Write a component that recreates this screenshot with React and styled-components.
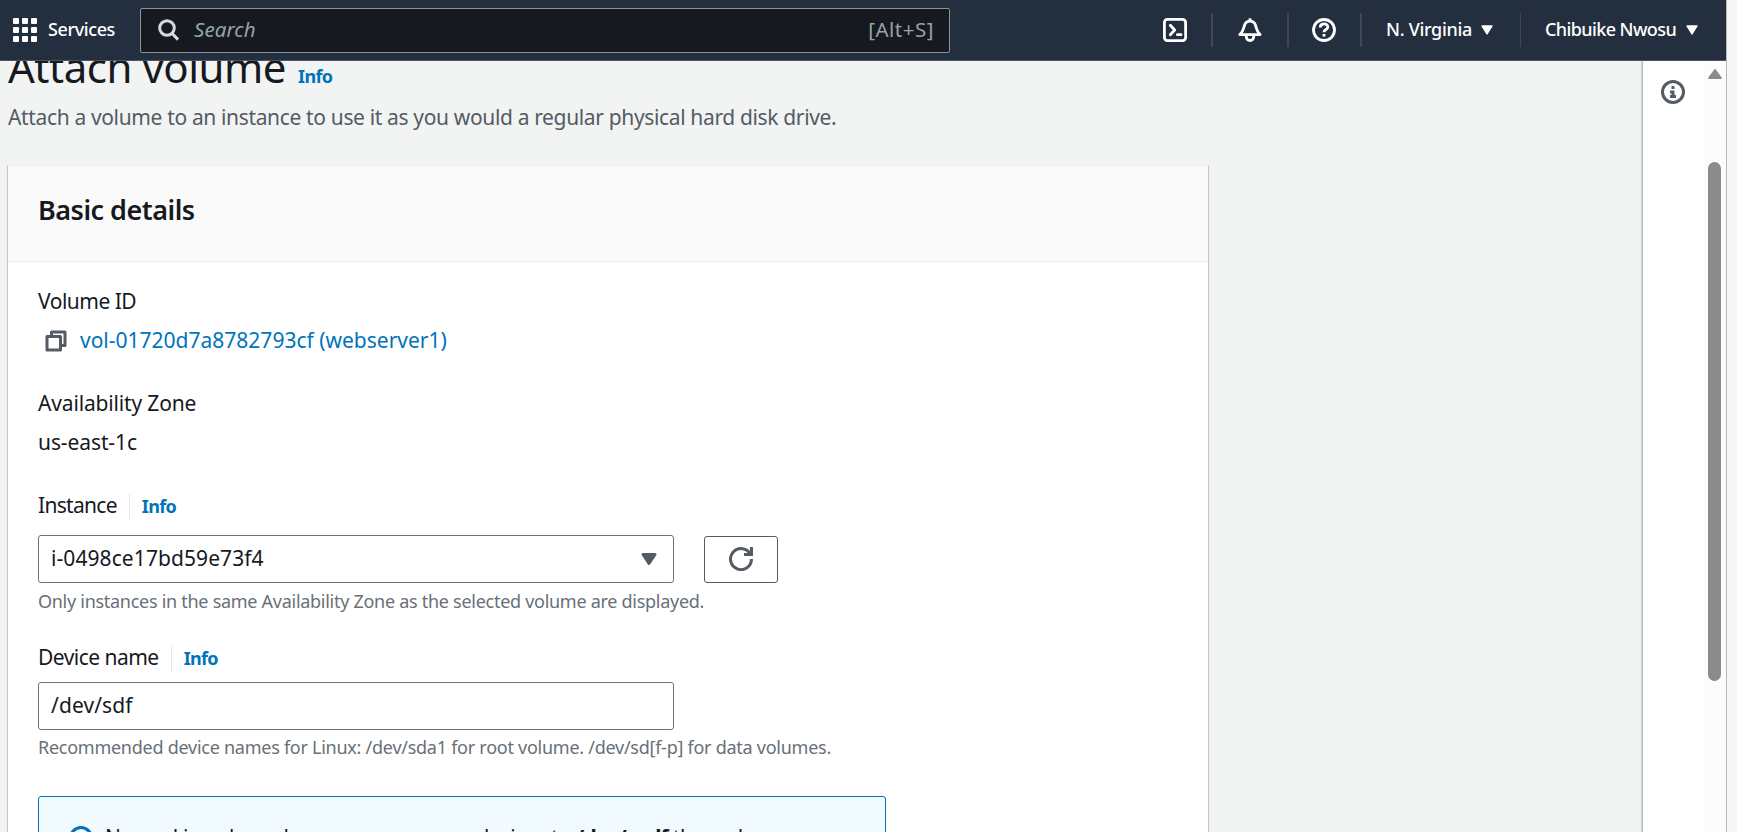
import React from 'react';
import styled, { createGlobalStyle } from 'styled-components';

const GlobalStyle = createGlobalStyle`
  *, *::before, *::after { box-sizing: border-box; }
  body {
    margin: 0;
    overflow: hidden;
    background: #f7f7f7;
    color: #16191f;
    font-family: 'Noto Sans', 'Liberation Sans', sans-serif;
    font-size: 21px;
    line-height: 33px;
  }
  button { font: inherit; margin: 0; }
  svg { display: block; flex: none; }
`;

const Frame = styled.div`
  display: flex;
  height: 832px;
  overflow: hidden;
`;

const Console = styled.div`
  width: 1726px;
  display: flex;
  flex-direction: column;
`;

const WindowEdge = styled.div`
  flex: 1;
  border-left: 1px solid #b9b9b9;
  background: #f7f7f7;
`;

/* Top navigation */
const TopNav = styled.header`
  flex: none;
  display: flex;
  align-items: center;
  height: 61px;
  padding-left: 13px;
  background: #232f3e;
  border-bottom: 1px solid #4b5664;
  color: #fff;
`;

const ServicesButton = styled.div`
  display: flex;
  align-items: center;
  gap: 11px;
  width: 127px;
`;

const DotGrid = styled.div`
  display: grid;
  grid-template-columns: repeat(3, 6px);
  grid-auto-rows: 6px;
  gap: 3px;
`;

const Dot = styled.i`
  background: #fff;
  border-radius: 1px;
`;

const NavLabel = styled.span`
  padding-bottom: 2px;
  font-size: 18px;
  line-height: 24px;
  font-weight: 500;
  letter-spacing: ${(p) => p.$tracking}px;
  width: ${(p) => (p.$width ? `${p.$width}px` : 'auto')};
  white-space: nowrap;
`;

const SearchBox = styled.div`
  display: flex;
  align-items: center;
  width: 810px;
  height: 45px;
  padding: 0 15px 0 17px;
  border: 1px solid #879596;
  border-radius: 2px;
  background: #16191f;
  color: #95a5a6;
  font-size: 20.5px;
`;

const SearchHint = styled.em`
  flex: 1;
  margin-left: 14px;
  padding-bottom: 2px;
  letter-spacing: 0.1px;
`;

const Shortcut = styled.span`
  padding-bottom: 2px;
  letter-spacing: 0.5px;
`;

const NavTools = styled.div`
  display: flex;
  align-items: center;
  margin-left: auto;
`;

const NavItem = styled.div`
  display: flex;
  align-items: center;
  gap: 10px;
  height: 34px;
  padding: 0 ${(p) => p.$right}px 0 ${(p) => p.$left}px;
  border-left: ${(p) => p.$rule || 0}px solid #414750;
`;

/* Work area */
const Workspace = styled.div`
  flex: 1;
  min-height: 0;
  display: flex;
`;

const Page = styled.main`
  flex: 1;
  overflow: hidden;
  padding-left: 8px;
  background: #f2f3f3;
`;

const TitleRow = styled.div`
  margin-top: -21px;
  height: 54px;
  display: flex;
  align-items: baseline;
  gap: 12px;
`;

const Title = styled.h1`
  margin: 0;
  font-size: 42px;
  line-height: 54px;
  font-weight: 400;
  letter-spacing: -0.48px;
`;

const InfoLink = styled.a`
  color: #0073bb;
  font-size: 18px;
  line-height: 24px;
  font-weight: 700;
  letter-spacing: -0.65px;
`;

const Description = styled.p`
  margin: 7px 0 31px;
  color: #545b64;
  letter-spacing: -0.352px;
`;

const Card = styled.section`
  width: 1200px;
  height: 800px;
  background: #fff;
  border-top: 1px solid #eaeded;
  box-shadow: 0 1px 1px 0 rgba(0, 28, 36, 0.3), 1px 1px 1px 0 rgba(0, 28, 36, 0.15),
    -1px 1px 1px 0 rgba(0, 28, 36, 0.15);
`;

const CardHeader = styled.div`
  height: 96px;
  padding: 27px 30px 0;
  background: #fafafa;
  border-bottom: 1px solid #eaeded;
`;

const CardTitle = styled.h2`
  margin: 0;
  font-size: 27px;
  line-height: 33px;
  font-weight: 600;
  letter-spacing: -0.5px;
`;

const CardBody = styled.div`
  padding: 23px 30px 0;
`;

const Field = styled.div`
  margin-bottom: ${(p) => p.$after}px;
`;

const LabelRow = styled.div`
  display: flex;
  align-items: baseline;
  margin-bottom: ${(p) => p.$gap ?? 6}px;
`;

const Label = styled.span`
  letter-spacing: ${(p) => p.$tracking}px;
`;

const LabelInfo = styled.span`
  display: flex;
  align-items: baseline;
  height: 26px;
  margin-left: 12px;
  padding-left: 12px;
  border-left: 1px solid #e6e8e9;
`;

const Value = styled.div`
  display: flex;
  align-items: center;
  gap: 12px;
  padding-left: ${(p) => p.$inset || 0}px;
  letter-spacing: ${(p) => p.$tracking || 0}px;
`;

const ResourceLink = styled.a`
  color: #0073bb;
`;

const ControlRow = styled.div`
  display: flex;
  align-items: flex-end;
  gap: 30px;
`;

const Control = styled.div`
  display: flex;
  align-items: center;
  justify-content: space-between;
  width: 636px;
  height: 48px;
  padding: 0 12px 1px;
  border: 1px solid #687078;
  border-radius: 3px;
  background: #fff;
  letter-spacing: 0.08px;
`;

const RefreshButton = styled.button`
  display: flex;
  align-items: center;
  justify-content: center;
  width: 74px;
  height: 47px;
  padding: 0 0 2px;
  border: 1px solid #545b64;
  border-radius: 3px;
  background: #fff;
`;

const Hint = styled.p`
  margin: ${(p) => p.$gap}px 0 0;
  color: #687078;
  font-size: 18px;
  line-height: 24px;
  letter-spacing: ${(p) => p.$tracking}px;
  white-space: nowrap;
`;

const Alert = styled.div`
  display: flex;
  align-items: flex-start;
  gap: 12px;
  width: 848px;
  height: 120px;
  padding: 24px 30px;
  border: 1px solid #0073bb;
  border-radius: 3px;
  background: #f1faff;
  letter-spacing: -0.41px;
`;

const AlertIcon = styled.span`
  padding-top: 5px;
`;

const DeviceName = styled.b`
  letter-spacing: -0.9px;
`;

/* Right-hand help rail and scrollbar */
const HelpRail = styled.aside`
  width: 61px;
  padding: 19px 0 0 18px;
  background: #fff;
  border-left: 1px solid #b6bec2;
  box-shadow: -1px 0 1px rgba(0, 28, 36, 0.12);
`;

const ScrollTrack = styled.div`
  width: 23px;
  padding: 8px 0 0 5px;
  background: #fcfcfc;
`;

const ScrollThumb = styled.div`
  width: 13px;
  height: 519px;
  margin-top: 83px;
  border-radius: 7px;
  background: #8b8b8b;
`;

const Line = ({ size = 24, box = 24, color = '#fff', width, children }) => (
  <svg width={size} height={size} viewBox={`0 0 ${box} ${box}`} fill="none" stroke={color} strokeWidth={width}>
    {children}
  </svg>
);

const SearchIcon = () => (
  <Line size={22} box={22} color="#d5dbdb" width={3}>
    <circle cx="9" cy="9" r="7.3" />
    <path d="M14 14.200l6 6.400" />
  </Line>
);

const TerminalIcon = () => (
  <Line width={2.8}>
    <rect x="1.4" y="1.4" width="21.2" height="21.2" rx="3" />
    <path d="M7.3 7.2l4.4 4.8-4.4 4.8" strokeLinecap="round" strokeLinejoin="round" />
    <path d="M14.4 16.7h3.6" strokeLinecap="round" />
  </Line>
);

const BellIcon = () => (
  <Line width={2.8}>
    <path d="M12 .3v2.8" />
    <path
      d="M1.8 16.6h20.4c-4-3.4-3.6-6.4-4.7-9.4C16.5 4.5 14.5 3.2 12 3.200S7.5 4.500 6.500 7.200c-1.100 3-.7 6-4.700 9.400z"
      strokeLinejoin="round"
    />
    <path d="M8.3 17.5v1.300a3.700 3.700 0 0 0 7.400 0v-1.300" />
  </Line>
);

const HelpIcon = () => (
  <Line width={2.8}>
    <circle cx="12" cy="12" r="10.5" />
    <path d="M8.2 9.6c0-5 7.700-4.800 7.600-.7 0 2.700-3.800 2.500-3.800 5.400" />
    <path d="M12 16v2.6" />
  </Line>
);

const InfoIcon = ({ color }) => (
  <Line box={16} color={color} width={2}>
    <circle cx="8" cy="8" r="7" />
    <path d="M8 11V8H6M10 11H6M8 6V4" />
  </Line>
);

const CopyIcon = () => (
  <Line box={16} color="#545b64" width={2}>
    <path d="M2 5h9v9H2zM5 5V2h9v9h-3" strokeLinejoin="round" />
  </Line>
);

const RefreshIcon = () => (
  <Line box={16} color="#545b64" width={2}>
    <path d="M10 5h5V0" />
    <path d="M12 5l3-3v3z" fill="#545b64" stroke="none" />
    <path d="M15 8a7 7 0 1 1-.7-3" />
  </Line>
);

const SelectCaret = () => (
  <Line box={16} color="#545b64" width={2}>
    <path d="M4 5h8l-4 6z" fill="#545b64" strokeLinejoin="round" />
  </Line>
);

const NavCaret = () => (
  <svg width="12" height="10" viewBox="0 0 12 10">
    <path d="M1 1h10L6 9z" fill="#fff" stroke="#fff" strokeWidth="1.4" strokeLinejoin="round" />
  </svg>
);

const ScrollUp = () => (
  <svg width="14" height="10" viewBox="0 0 14 10">
    <path d="M7 1l5.8 8H1.200z" fill="#8b8b8b" stroke="#8b8b8b" strokeWidth="2" strokeLinejoin="round" />
  </svg>
);

export default function App() {
  return (
    <>
      <GlobalStyle />
      <Frame>
        <Console>
          <TopNav>
            <ServicesButton>
              <DotGrid>
                {Array.from({ length: 9 }, (_, i) => (
                  <Dot key={i} />
                ))}
              </DotGrid>
              <NavLabel $tracking={-0.4}>Services</NavLabel>
            </ServicesButton>
            <SearchBox>
              <SearchIcon />
              <SearchHint>Search</SearchHint>
              <Shortcut>[Alt+S]</Shortcut>
            </SearchBox>
            <NavTools>
              <NavItem $left={0} $right={24}>
                <TerminalIcon />
              </NavItem>
              <NavItem $left={25} $right={25} $rule={2}>
                <BellIcon />
              </NavItem>
              <NavItem $left={23} $right={24} $rule={2}>
                <HelpIcon />
              </NavItem>
              <NavItem $left={24} $right={27} $rule={2}>
                <NavLabel $tracking={-0.3} $width={85}>N. Virginia</NavLabel>
                <NavCaret />
              </NavItem>
              <NavItem $left={24} $right={28} $rule={1}>
                <NavLabel $tracking={-0.6} $width={131}>Chibuike Nwosu</NavLabel>
                <NavCaret />
              </NavItem>
            </NavTools>
          </TopNav>
          <Workspace>
            <Page>
              <TitleRow>
                <Title>Attach volume</Title>
                <InfoLink>Info</InfoLink>
              </TitleRow>
              <Description>
                Attach a volume to an instance to use it as you would a regular physical hard disk drive.
              </Description>
              <Card>
                <CardHeader>
                  <CardTitle>Basic details</CardTitle>
                </CardHeader>
                <CardBody>
                  <Field $after={30}>
                    <LabelRow>
                      <Label $tracking={-0.5}>Volume ID</Label>
                    </LabelRow>
                    <Value $inset={6}>
                      <CopyIcon />
                      <ResourceLink>vol-01720d7a8782793cf (webserver1)</ResourceLink>
                    </Value>
                  </Field>
                  <Field $after={30}>
                    <LabelRow>
                      <Label $tracking={-0.16}>Availability Zone</Label>
                    </LabelRow>
                    <Value $tracking={-0.1}>us-east-1c</Value>
                  </Field>
                  <Field $after={28}>
                    <LabelRow $gap={13}>
                      <Label $tracking={-0.7}>Instance</Label>
                      <LabelInfo>
                        <InfoLink>Info</InfoLink>
                      </LabelInfo>
                    </LabelRow>
                    <ControlRow>
                      <Control>
                        <span>i-0498ce17bd59e73f4</span>
                        <SelectCaret />
                      </Control>
                      <RefreshButton aria-label="Refresh">
                        <RefreshIcon />
                      </RefreshButton>
                    </ControlRow>
                    <Hint $gap={6} $tracking={-0.28}>
                      Only instances in the same Availability Zone as the selected volume are displayed.
                    </Hint>
                  </Field>
                  <Field $after={37}>
                    <LabelRow $gap={8}>
                      <Label $tracking={-0.53}>Device name</Label>
                      <LabelInfo>
                        <InfoLink>Info</InfoLink>
                      </LabelInfo>
                    </LabelRow>
                    <Control>/dev/sdf</Control>
                    <Hint $gap={5} $tracking={-0.26}>
                      Recommended device names for Linux: /dev/sda1 for root volume. /dev/sd[f-p] for data volumes.
                    </Hint>
                  </Field>
                  <Alert>
                    <AlertIcon>
                      <InfoIcon color="#0073bb" />
                    </AlertIcon>
                    <span>
                      Newer Linux kernels may rename your devices to <DeviceName>/dev/xvdf</DeviceName> through
                    </span>
                  </Alert>
                </CardBody>
              </Card>
            </Page>
            <HelpRail>
              <InfoIcon color="#545b64" />
            </HelpRail>
            <ScrollTrack>
              <ScrollUp />
              <ScrollThumb />
            </ScrollTrack>
          </Workspace>
        </Console>
        <WindowEdge />
      </Frame>
    </>
  );
}
